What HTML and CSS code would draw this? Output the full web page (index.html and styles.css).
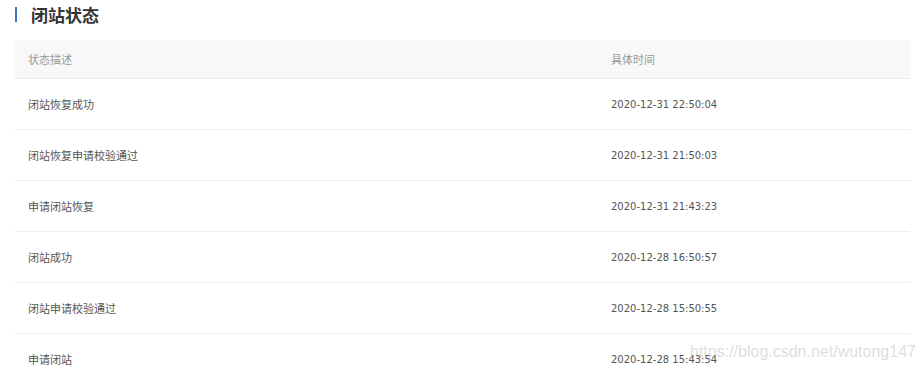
FILE: index.html
```html
<!DOCTYPE html>
<html lang="zh">
<head>
<meta charset="utf-8">
<link rel="stylesheet" href="styles.css">
</head>
<body>
<div class="page">
  <h2 class="title">闭站状态</h2>
  <div class="table">
    <div class="row head"><div class="c1">状态描述</div><div class="c2">具体时间</div></div>
    <div class="row"><div class="c1">闭站恢复成功</div><div class="c2">2020-12-31 22:50:04</div></div>
    <div class="row"><div class="c1">闭站恢复申请校验通过</div><div class="c2">2020-12-31 21:50:03</div></div>
    <div class="row"><div class="c1">申请闭站恢复</div><div class="c2">2020-12-31 21:43:23</div></div>
    <div class="row"><div class="c1">闭站成功</div><div class="c2">2020-12-28 16:50:57</div></div>
    <div class="row"><div class="c1">闭站申请校验通过</div><div class="c2">2020-12-28 15:50:55</div></div>
    <div class="row"><div class="c1">申请闭站</div><div class="c2">2020-12-28 15:43:54</div></div>
  </div>
  <div class="watermark">https://blog.csdn.net/wutong147</div>
</div>
</body>
</html>
```

FILE: styles.css
```css
html, body {
  margin: 0;
  padding: 0;
  background: #fff;
}
body {
  font-family: "Noto Sans CJK SC", "Noto Sans", sans-serif;
  color: #555;
  overflow: hidden;
}
.page {
  position: relative;
  width: 922px;
  height: 368px;
  padding: 0 12px 0 15px;
  box-sizing: border-box;
}
.title {
  margin: 0;
  display: flex;
  align-items: center;
  font-size: 17px;
  font-weight: bold;
  color: #333;
  border-left: 2px solid #3b6fc4;
  padding-left: 14px;
  line-height: 16px;
  height: 15px;
  margin-top: 7px;
  margin-bottom: 18px;
}
.table {
  width: 895px;
}
.row {
  display: flex;
  height: 50px;
  align-items: center;
  border-bottom: 1px solid #eeeeee;
  font-size: 11px;
}
.row.head {
  height: 38px;
  background: #f8f8f8;
  color: #999;
}
.c1 {
  width: 583px;
  padding-left: 13px;
  flex: none;
}
.c2 {
  flex: 1;
  font-family: "DejaVu Sans", "Noto Sans", sans-serif;
  font-size: 10px;
  color: #555;
}
.row.head .c2 {
  font-family: "Noto Sans CJK SC", sans-serif;
  font-size: 11px;
  color: #999;
}
.watermark {
  position: absolute;
  left: 690px;
  top: 336px;
  font-family: "Liberation Sans", Arial, sans-serif;
  font-size: 16px;
  color: rgba(180, 180, 180, 0.45);
  white-space: nowrap;
}
```
